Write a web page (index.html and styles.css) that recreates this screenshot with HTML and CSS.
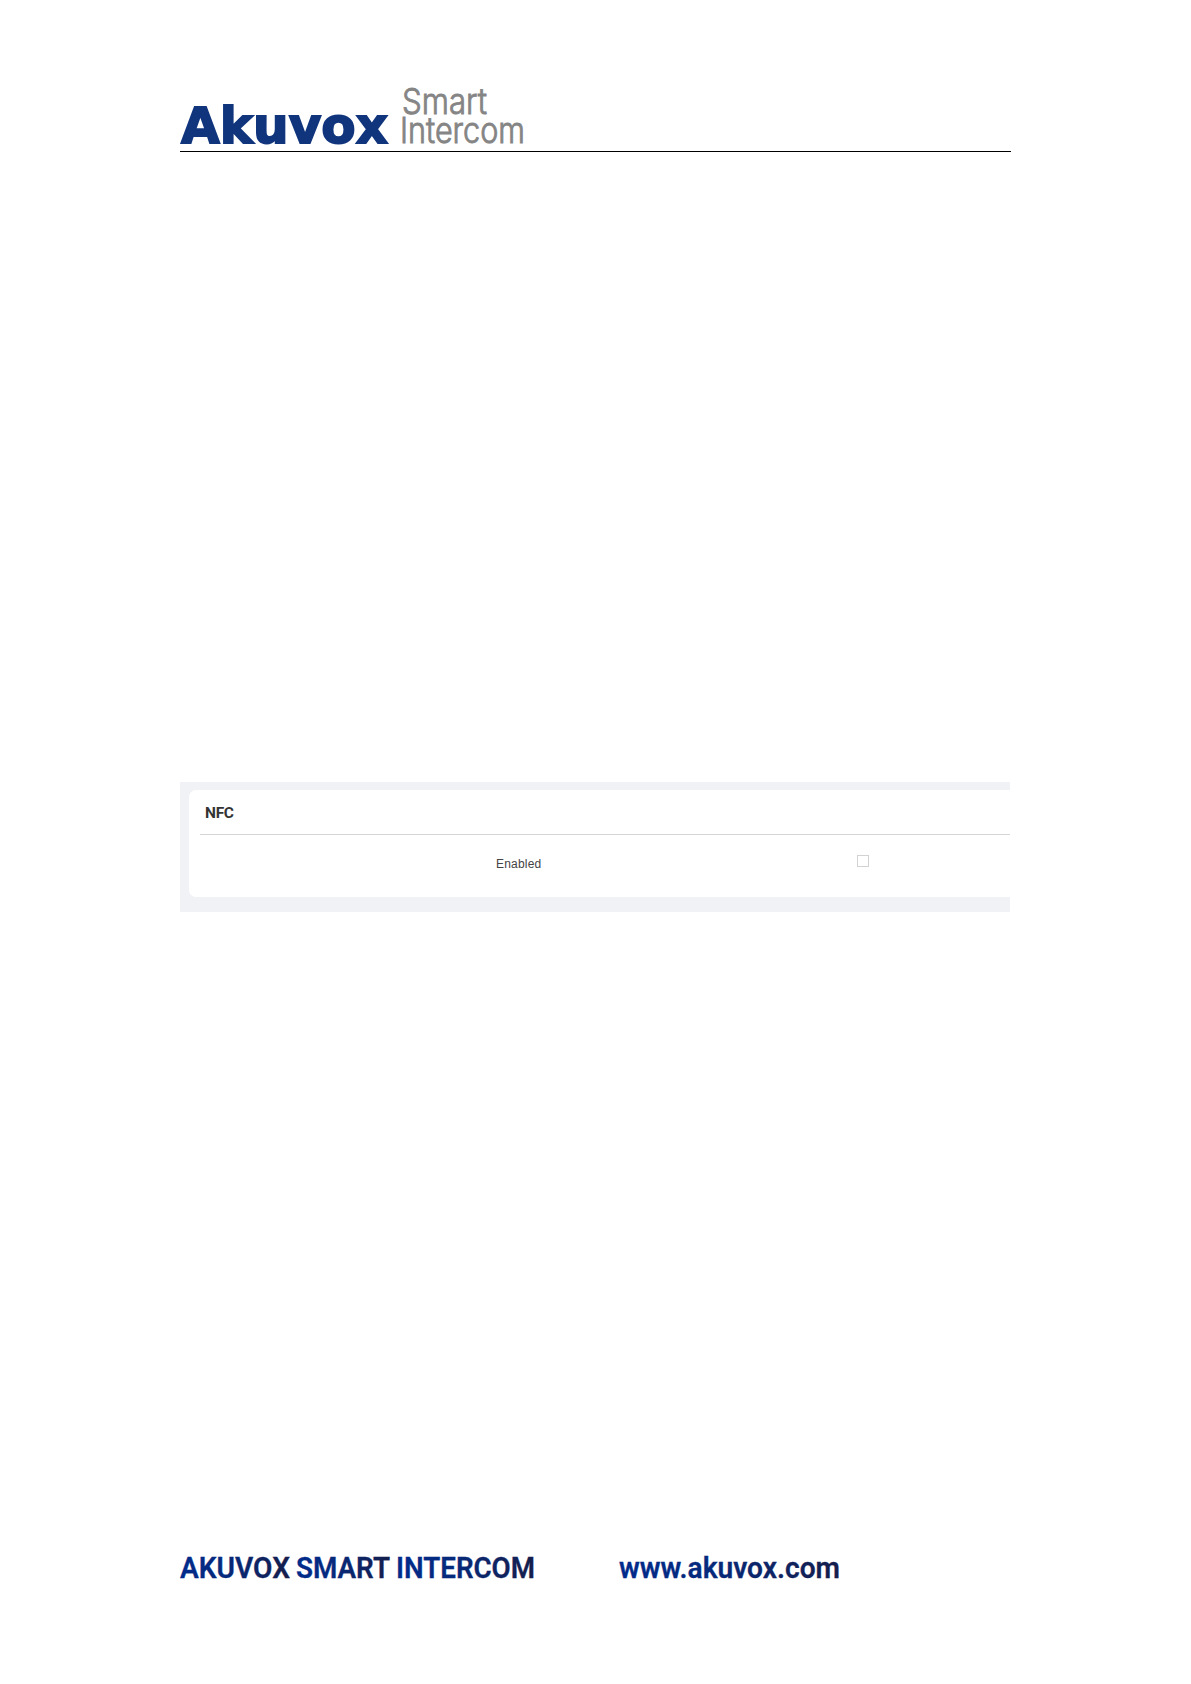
FILE: index.html
```html
<!DOCTYPE html>
<html lang="en">
<head>
<meta charset="utf-8">
<title>Akuvox Smart Intercom</title>
<link rel="stylesheet" href="styles.css">
</head>
<body>
<div class="page">
  <header class="header">
    <svg class="logo" width="360" height="70" viewBox="0 0 360 70" role="img" aria-label="Akuvox Smart Intercom">
      <text class="brand" x="1" y="62" textLength="207" lengthAdjust="spacingAndGlyphs">Akuvox</text>
      <text class="tag" x="222" y="32.5" textLength="85" lengthAdjust="spacingAndGlyphs">Smart</text>
      <text class="tag" x="220" y="62" textLength="125" lengthAdjust="spacingAndGlyphs">Intercom</text>
    </svg>
  </header>
  <main class="content">
    <section class="panel">
      <div class="card">
        <h2 class="title">NFC</h2>
        <div class="row">
          <label class="label" for="nfc">Enabled</label>
          <input class="check" id="nfc" type="checkbox">
        </div>
      </div>
    </section>
  </main>
  <footer class="footer">
    <svg width="700" height="40" viewBox="0 0 700 40">
      <defs>
        <linearGradient id="ink">
          <stop offset="0" stop-color="#002b8c"/>
          <stop offset="0.4" stop-color="#062a7c"/>
          <stop offset="1" stop-color="#151e4b"/>
        </linearGradient>
      </defs>
      <g class="foot">
        <text x="0" y="28" textLength="110" lengthAdjust="spacingAndGlyphs">AKUVOX</text>
        <text x="116" y="28" textLength="94" lengthAdjust="spacingAndGlyphs">SMART</text>
        <text x="216" y="28" textLength="139" lengthAdjust="spacingAndGlyphs">INTERCOM</text>
        <text x="439" y="28" textLength="221" lengthAdjust="spacingAndGlyphs">www.akuvox.com</text>
      </g>
    </svg>
  </footer>
</div>
</body>
</html>
```
FILE: styles.css
```css
* { box-sizing: border-box; }
body { margin: 0; background: #fff; }
.page {
  width: 1191px;
  height: 1684px;
  padding: 81px 180px 94px;
  display: flex;
  flex-direction: column;
}
.header { height: 71px; border-bottom: 1px solid #000; }
.logo, .footer svg { display: block; overflow: visible; }
.brand {
  font: 700 50px "DejaVu Sans", sans-serif;
  fill: #10357d;
  stroke: #10357d;
  stroke-width: 1.8px;
}
.tag { font: 300 35.5px Inter, sans-serif; fill: #858585; stroke: #858585; stroke-width: 0.9px; }
.content { flex: 1; padding-top: 630px; }
.panel {
  height: 130px;
  margin-right: 1px;
  padding: 8px 0 15px 9px;
  background: #f0f2f5;
}
.card {
  height: 107px;
  padding-left: 11px;
  background: #fff;
  border-radius: 7px 0 0 7px;
}
.title {
  height: 45px;
  margin: 0;
  padding: 1px 0 0 5px;
  border-bottom: 1px solid #d5d5d8;
  font: 700 15.5px/44px Roboto, sans-serif;
  letter-spacing: -0.3px;
  color: #333;
}
.row { display: flex; align-items: flex-start; padding: 20px 0 0 296px; }
.label {
  width: 361px;
  padding-top: 2px;
  font: 12px/14px "Liberation Sans", Arial, sans-serif;
  letter-spacing: 0.2px;
  color: #444;
}
.check {
  appearance: none;
  width: 12px;
  height: 12px;
  margin: 0;
  border: 1px solid #d2d2d5;
  background: #fff;
}
.footer { height: 40px; }
.foot text { font: 600 29px Roboto, sans-serif; fill: url(#ink); stroke: url(#ink); stroke-width: 0.3px; }
```
